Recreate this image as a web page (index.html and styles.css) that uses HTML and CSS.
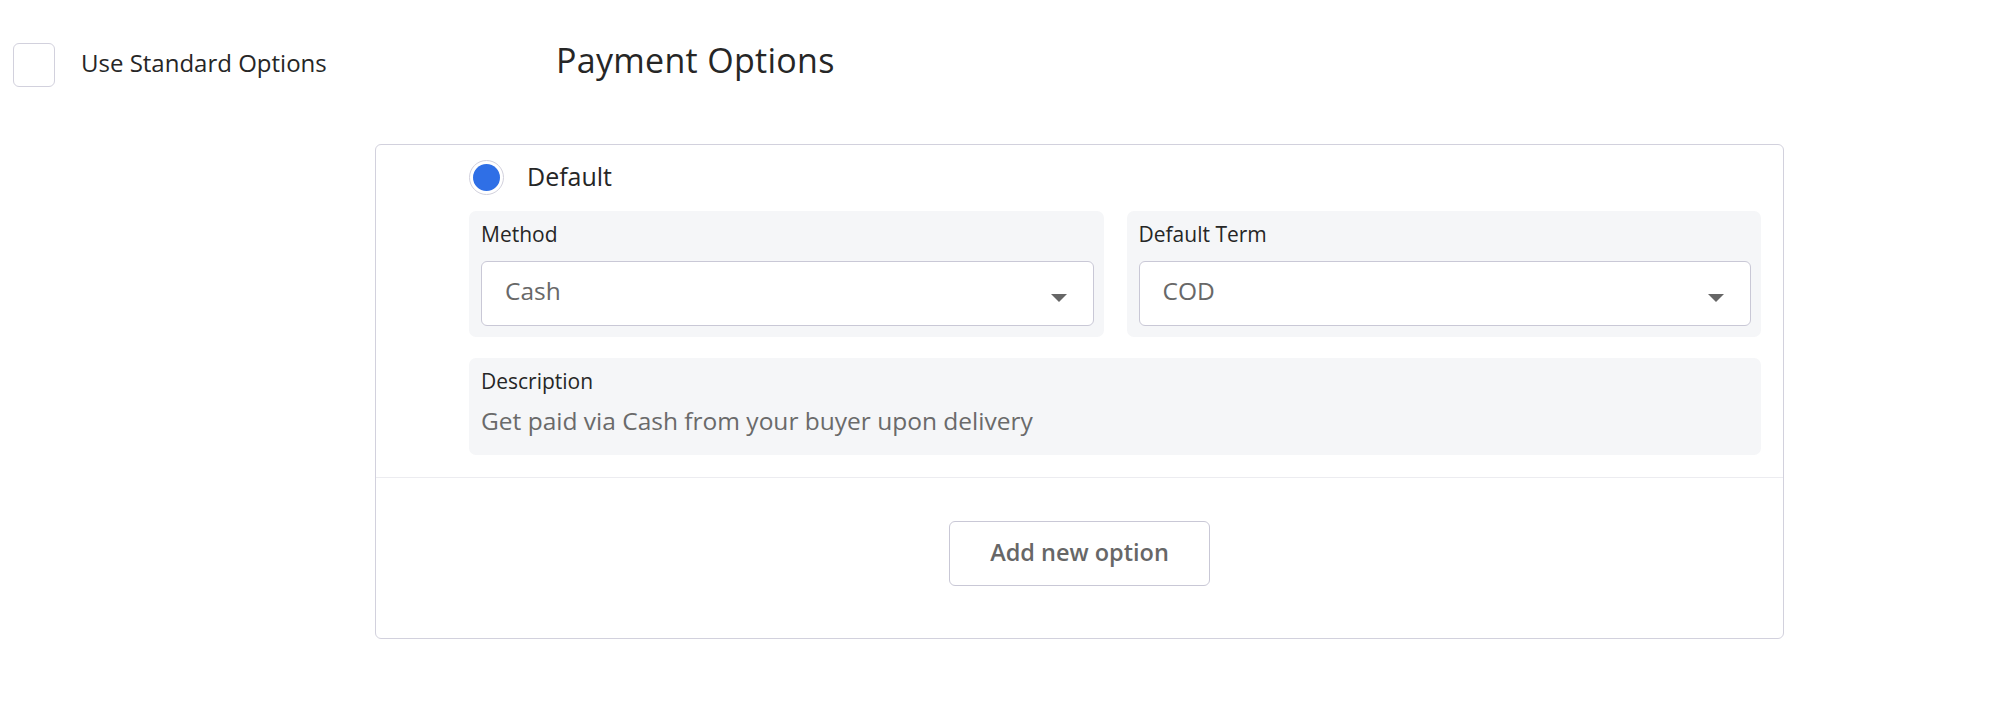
FILE: index.html
```html
<!DOCTYPE html>
<html lang="en">
<head>
  <meta charset="UTF-8" />
  <meta name="viewport" content="width=device-width, initial-scale=1.0"/>
  <title>Payment Options</title>
  <link rel="stylesheet" href="styles.css">
</head>
<body>
  <div class="page">
    <div class="top-row">
      <label class="standard">
        <span class="checkbox"></span>
        <span class="standard-label">Use Standard Options</span>
      </label>
      <h1 class="title">Payment Options</h1>
    </div>

    <div class="options-box">
      <div class="options-body">
        <div class="radio-row">
          <span class="radio"><span class="radio-dot"></span></span>
          <span class="radio-label">Default</span>
        </div>

        <div class="field-grid">
          <div class="field">
            <div class="field-label">Method</div>
            <div class="select">
              <span>Cash</span>
              <span class="caret"></span>
            </div>
          </div>
          <div class="field">
            <div class="field-label">Default Term</div>
            <div class="select">
              <span>COD</span>
              <span class="caret"></span>
            </div>
          </div>
        </div>

        <div class="field description">
          <div class="field-label">Description</div>
          <div class="description-text">Get paid via Cash from your buyer upon delivery</div>
        </div>
      </div>

      <div class="options-footer">
        <button class="add-btn">Add new option</button>
      </div>
    </div>
  </div>
</body>
</html>
```

FILE: styles.css
```css
body {
  margin: 0;
  font-family: "Open Sans", "Noto Sans", sans-serif;
  color: #262626;
  background: #fff;
}

.page {
  padding: 43px 0 0 13px;
}

.top-row {
  display: flex;
  align-items: flex-start;
}

.standard {
  display: flex;
  align-items: center;
  width: 543px;
}

.checkbox {
  width: 40px;
  height: 42px;
  border: 1px solid #d2d1dd;
  border-radius: 6px;
}

.standard-label {
  margin-left: 26px;
  margin-bottom: 5px;
  font-size: 24px;
}

.title {
  margin: -1px 0 0;
  font-size: 34px;
  font-weight: 500;
  line-height: 36px;
  letter-spacing: 0.3px;
}

.options-box {
  margin: 57px 0 0 362px;
  width: 1407px;
  border: 1px solid #d2d1dd;
  border-radius: 6px;
}

.options-body {
  padding: 15px 22px 22px 93px;
}

.radio-row {
  display: flex;
  align-items: center;
  height: 35px;
}

.radio {
  width: 33px;
  height: 33px;
  border: 1px solid #d2d1dd;
  border-radius: 50%;
  display: flex;
  align-items: center;
  justify-content: center;
}

.radio-dot {
  width: 27px;
  height: 27px;
  border-radius: 50%;
  background: #2f6fe6;
}

.radio-label {
  margin-left: 23px;
  font-size: 25px;
  position: relative;
  top: -2px;
}

.field-grid {
  display: grid;
  grid-template-columns: 1fr 1fr;
  gap: 23px;
  margin-top: 16px;
}

.field {
  background: #f5f6f8;
  border-radius: 7px;
  padding: 11px 10px 11px 12px;
}

.field-label {
  font-size: 21px;
  line-height: 24px;
  margin-bottom: 15px;
}

.select {
  display: flex;
  align-items: center;
  justify-content: space-between;
  height: 63px;
  padding: 0 26px 0 23px;
  background: #fff;
  border: 1px solid #c9c8d6;
  border-radius: 6px;
  font-size: 24.5px;
  color: #686868;
}

.select span:first-child {
  margin-bottom: 7px;
}

.caret {
  width: 0;
  height: 0;
  border-left: 8px solid transparent;
  border-right: 8px solid transparent;
  border-top: 8px solid #666;
  margin-top: 8px;
}

.description {
  margin-top: 21px;
  padding-bottom: 22px;
}

.description .field-label {
  margin-bottom: 16px;
}

.description-text {
  font-size: 24.5px;
  line-height: 24px;
  color: #6a6a6a;
}

.options-footer {
  border-top: 1px solid #ececf0;
  padding: 43px 0 52px;
  display: flex;
  justify-content: center;
}

.add-btn {
  width: 261px;
  height: 65px;
  padding: 0 0 4px;
  background: #fff;
  border: 1px solid #c9c8d6;
  border-radius: 6px;
  font-family: inherit;
  font-size: 23.5px;
  font-weight: 600;
  color: #676767;
  cursor: pointer;
}
```
